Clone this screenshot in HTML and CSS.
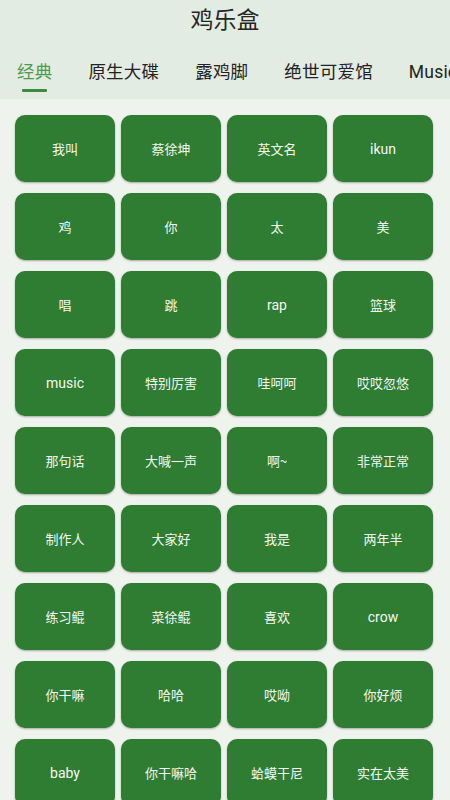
FILE: index.html
```html
<!DOCTYPE html>
<html lang="zh">
<head>
<meta charset="utf-8">
<link rel="stylesheet" href="styles.css">
</head>
<body>
<div class="app">
  <header class="header">
    <div class="title">鸡乐盒</div>
    <nav class="tabs">
      <div class="tab active"><span class="tab-label">经典</span><span class="indicator"></span></div>
      <div class="tab"><span class="tab-label">原生大碟</span></div>
      <div class="tab"><span class="tab-label">露鸡脚</span></div>
      <div class="tab"><span class="tab-label">绝世可爱馆</span></div>
      <div class="tab"><span class="tab-label">Music</span></div>
    </nav>
  </header>
  <main class="grid">
    <button class="btn">我叫</button>
    <button class="btn">蔡徐坤</button>
    <button class="btn">英文名</button>
    <button class="btn en">ikun</button>
    <button class="btn">鸡</button>
    <button class="btn">你</button>
    <button class="btn">太</button>
    <button class="btn">美</button>
    <button class="btn">唱</button>
    <button class="btn">跳</button>
    <button class="btn en">rap</button>
    <button class="btn">篮球</button>
    <button class="btn en">music</button>
    <button class="btn">特别厉害</button>
    <button class="btn">哇呵呵</button>
    <button class="btn">哎哎忽悠</button>
    <button class="btn">那句话</button>
    <button class="btn">大喊一声</button>
    <button class="btn">啊~</button>
    <button class="btn">非常正常</button>
    <button class="btn">制作人</button>
    <button class="btn">大家好</button>
    <button class="btn">我是</button>
    <button class="btn">两年半</button>
    <button class="btn">练习鲲</button>
    <button class="btn">菜徐鲲</button>
    <button class="btn">喜欢</button>
    <button class="btn en">crow</button>
    <button class="btn">你干嘛</button>
    <button class="btn">哈哈</button>
    <button class="btn">哎呦</button>
    <button class="btn">你好烦</button>
    <button class="btn en">baby</button>
    <button class="btn">你干嘛哈</button>
    <button class="btn">蛤蟆干尼</button>
    <button class="btn">实在太美</button>
  </main>
</div>
</body>
</html>
```
FILE: styles.css
```css
* { box-sizing: border-box; }
html, body {
  margin: 0;
  padding: 0;
  width: 450px;
  height: 800px;
  overflow: hidden;
  background: #eef3ee;
  font-family: Roboto, "Noto Sans CJK SC", sans-serif;
}
.app {
  width: 450px;
  height: 800px;
  overflow: hidden;
}
.header {
  background: #e2ece2;
  height: 99px;
}
.title {
  height: 36px;
  line-height: 36px;
  text-align: center;
  font-size: 23px;
  color: #262626;
  font-weight: 400;
  font-family: "Noto Sans CJK SC", sans-serif;
}
.tabs {
  display: flex;
  height: 63px;
  padding-left: 17px;
  overflow: hidden;
  white-space: nowrap;
}
.tab {
  display: flex;
  flex-direction: column;
  align-items: center;
  padding-top: 24px;
  margin-right: 36px;
  flex-shrink: 0;
}
.tab-label {
  font-size: 17.5px;
  line-height: 24px;
  color: #222;
  letter-spacing: 0.2px;
}
.tab.active .tab-label {
  color: #4f9a53;
}
.indicator {
  display: block;
  width: 25px;
  height: 3px;
  margin-top: 5px;
  background: #3f8a43;
  border-radius: 1px;
}
.grid {
  display: grid;
  grid-template-columns: repeat(4, 100px);
  column-gap: 6px;
  row-gap: 11px;
  padding: 16px 0 0 15px;
}
.btn {
  height: 67px;
  border: none;
  border-radius: 10px;
  background: #2e7d32;
  color: #f4f8f4;
  font-family: "Noto Sans CJK SC", sans-serif;
  font-size: 13px;
  font-weight: 400;
  box-shadow: 0 1px 2px rgba(0, 0, 0, 0.3);
  padding: 0;
}
.btn.en {
  font-family: Roboto, sans-serif;
  font-size: 14px;
  font-weight: 400;
}
```
